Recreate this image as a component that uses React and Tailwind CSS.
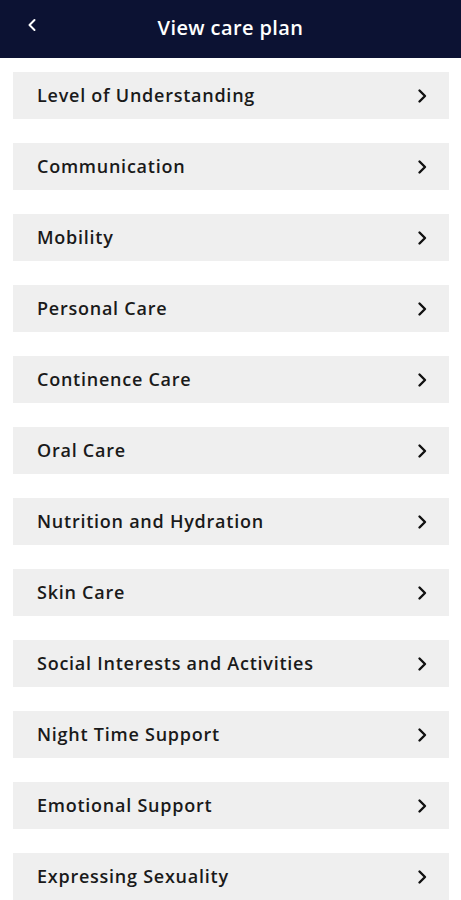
import React from "react";

const items = [
  "Level of Understanding",
  "Communication",
  "Mobility",
  "Personal Care",
  "Continence Care",
  "Oral Care",
  "Nutrition and Hydration",
  "Skin Care",
  "Social Interests and Activities",
  "Night Time Support",
  "Emotional Support",
  "Expressing Sexuality",
];

function Chevron({ className }) {
  return (
    <svg viewBox="0 0 12 16" className={className} fill="none" stroke="currentColor" strokeWidth="2.4" strokeLinecap="round" strokeLinejoin="round">
      <path d="M3.5 2.5 L9 8 L3.5 13.5" />
    </svg>
  );
}

export default function App() {
  return (
    <div className="min-h-[900px] w-[461px] bg-white font-['Open_Sans',sans-serif]">
      <div className="relative flex h-[58px] items-center justify-center bg-[#0c1233] pb-[3px]">
        <button className="absolute left-[26px] top-[17px] text-white">
          <svg viewBox="0 0 12 16" className="h-[16px] w-[12px]" fill="none" stroke="currentColor" strokeWidth="2" strokeLinecap="round" strokeLinejoin="round">
            <path d="M8.5 3 L3.5 8 L8.5 13" />
          </svg>
        </button>
        <h1 className="text-[20px] font-semibold tracking-[0.4px] text-white">View care plan</h1>
      </div>
      <div className="flex flex-col gap-[24px] px-[13px] pt-[14px] pr-[12px]">
        {items.map((item) => (
          <div key={item} className="flex h-[47px] items-center justify-between bg-[#efefef] pl-[24px] pr-[21px]">
            <span className="text-[18px] font-semibold tracking-[0.75px] text-[#1a1a1a]">{item}</span>
            <Chevron className="h-[16px] w-[12px] text-[#111]" />
          </div>
        ))}
      </div>
    </div>
  );
}
